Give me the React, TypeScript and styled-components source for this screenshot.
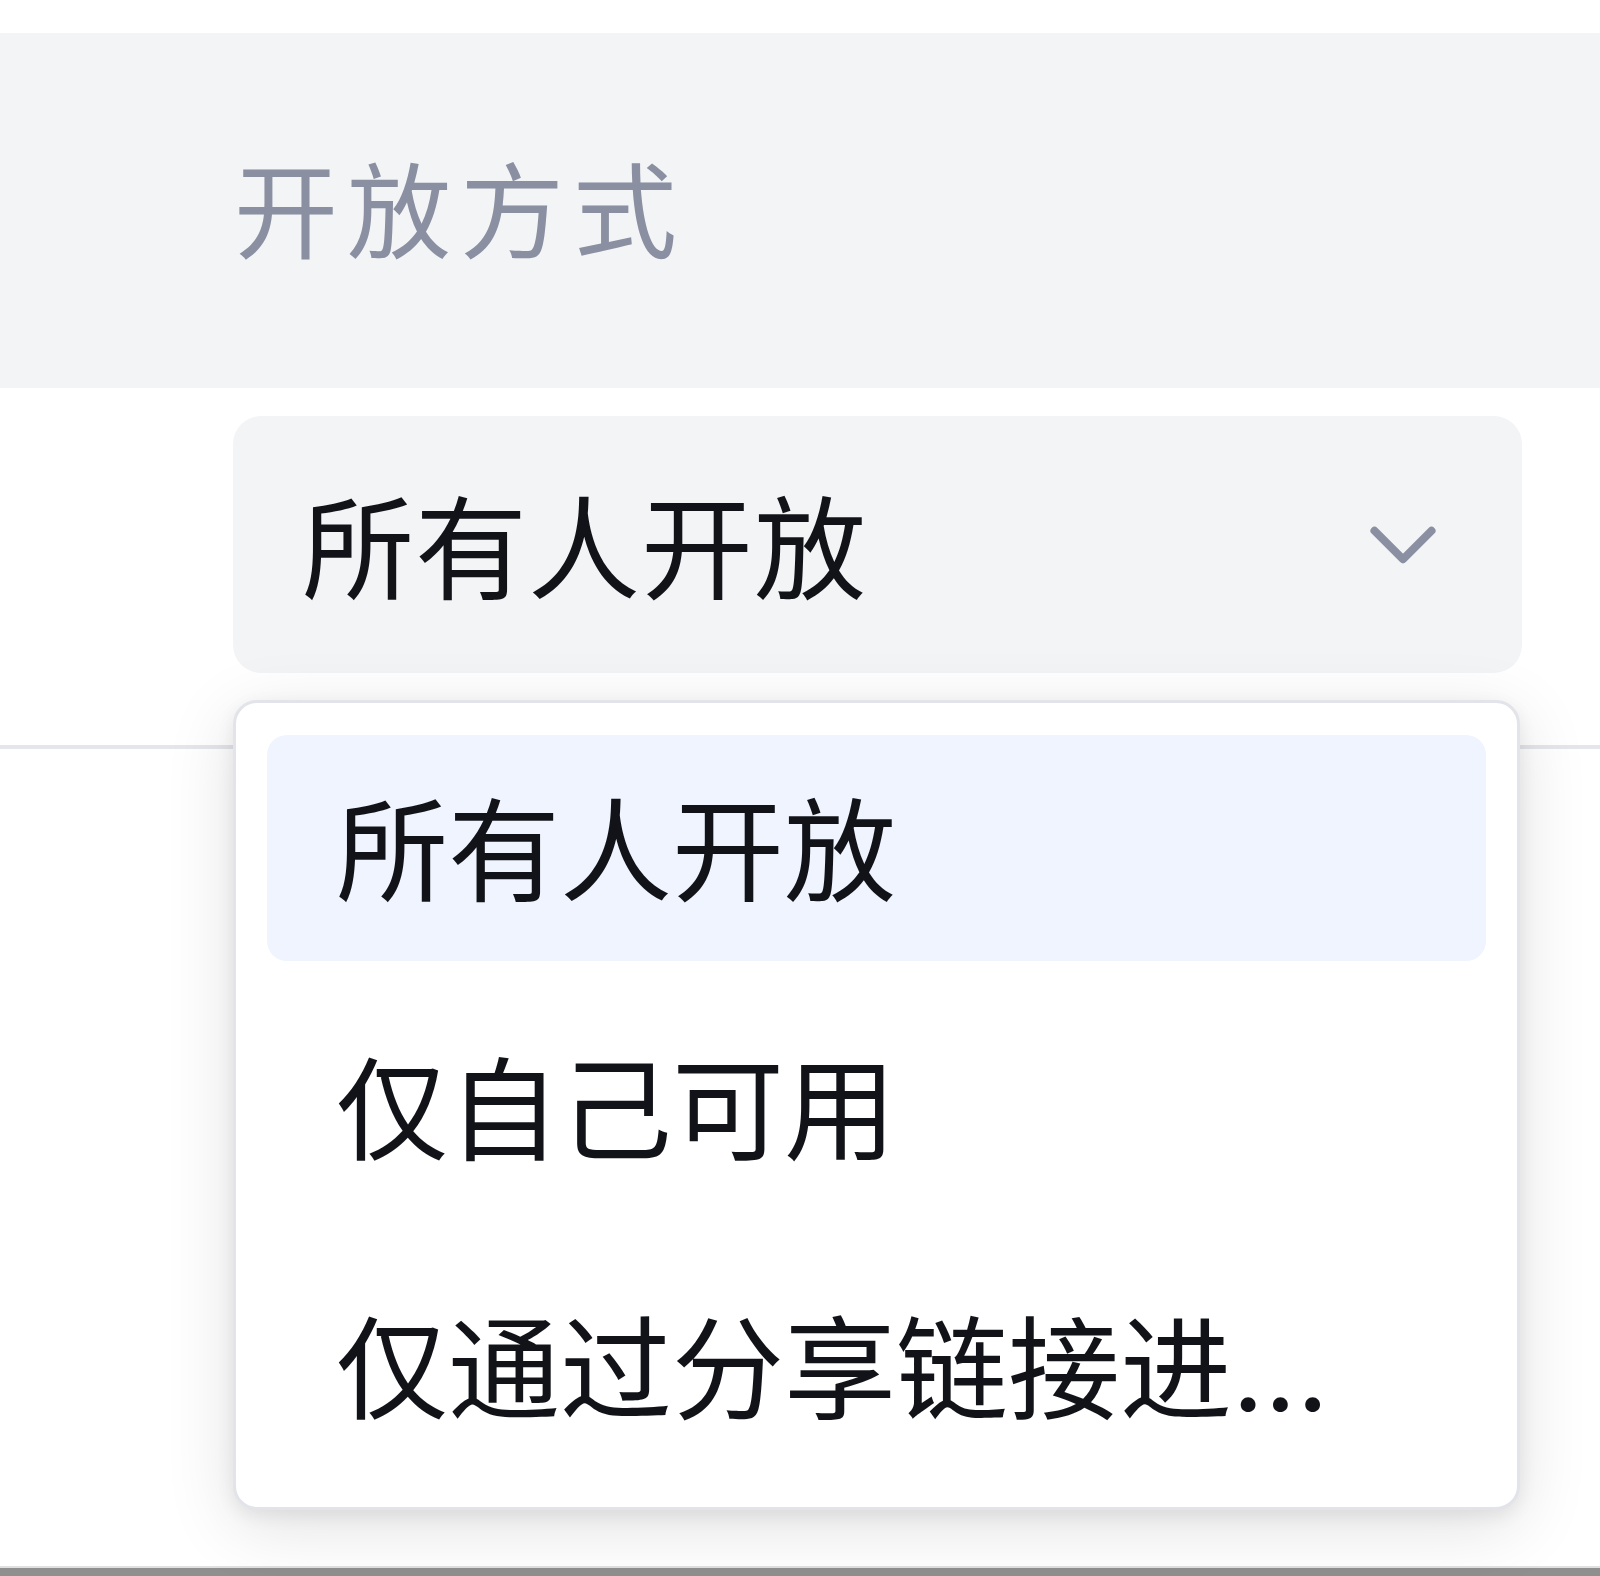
import React, { useState } from 'react';
import styled, { createGlobalStyle } from 'styled-components';
import { ChevronDown } from 'lucide-react';

const GlobalStyle = createGlobalStyle`
  html, body {
    margin: 0;
    padding: 0;
    background: #ffffff;
  }
  body {
    font-family: "Inter", "Noto Sans CJK SC", "Noto Sans", sans-serif;
    color: #111318;
  }
  * {
    box-sizing: border-box;
  }
`;

const Page = styled.div`
  min-height: 100vh;
  display: flex;
  flex-direction: column;
  padding-top: 33px;
  overflow: hidden;
`;

const Table = styled.div`
  display: flex;
  flex-direction: column;
`;

const HeaderRow = styled.div`
  height: 355px;
  background: #f3f4f6;
  display: flex;
  align-items: center;
  padding: 0 0 10px 234px;
`;

const HeaderLabel = styled.span`
  font-size: 104px;
  color: #8a8fa1;
  letter-spacing: 9px;
`;

const BodyRow = styled.div`
  padding: 28px 0 72px 233px;
  border-bottom: 4px solid #e4e6eb;
`;

const SelectWrap = styled.div`
  position: relative;
  width: 1289px;
`;

const SelectBox = styled.div`
  height: 257px;
  background: #f3f4f6;
  border-radius: 28px;
  display: flex;
  align-items: center;
  justify-content: space-between;
  padding: 0 62px 6px 69px;
  font-size: 112px;
  letter-spacing: 1px;
  cursor: pointer;

  .chevron {
    color: #8a8fa1;
    flex-shrink: 0;
    margin-top: 6px;
  }
`;

const Menu = styled.ul`
  position: absolute;
  top: calc(100% + 27px);
  left: 0;
  width: 1287px;
  margin: 0;
  list-style: none;
  background: #ffffff;
  border: 3px solid #e2e4ea;
  border-radius: 24px;
  padding: 32px 31px 28px;
  display: flex;
  flex-direction: column;
  gap: 33px;
  box-shadow: 0 16px 70px rgba(0, 0, 0, 0.12), 0 6px 18px rgba(0, 0, 0, 0.07);
  z-index: 10;
`;

const MenuItem = styled.li<{ $active: boolean }>`
  height: 226px;
  display: flex;
  align-items: center;
  padding: 0 64px 8px 69px;
  border-radius: 20px;
  font-size: 112px;
  white-space: nowrap;
  overflow: hidden;
  text-overflow: ellipsis;
  background: ${p => (p.$active ? '#eff4fe' : 'transparent')};
  cursor: pointer;
`;

const Spacer = styled.div`
  flex: 1;
`;

const BottomBar = styled.div`
  height: 10px;
  background: #8f8f8f;
  border-top: 2px solid #e0e0e0;
`;

const options = ['所有人开放', '仅自己可用', '仅通过分享链接进...'];

export default function App() {
  const [selected, setSelected] = useState(0);

  return (
    <>
      <GlobalStyle />
      <Page>
        <Table>
          <HeaderRow>
            <HeaderLabel>开放方式</HeaderLabel>
          </HeaderRow>
          <BodyRow>
            <SelectWrap>
              <SelectBox>
                <span>{options[selected]}</span>
                <ChevronDown className="chevron" size={114} strokeWidth={1.7} />
              </SelectBox>
              <Menu>
                {options.map((opt, i) => (
                  <MenuItem key={opt} $active={i === selected} onClick={() => setSelected(i)}>
                    {opt}
                  </MenuItem>
                ))}
              </Menu>
            </SelectWrap>
          </BodyRow>
        </Table>
        <Spacer />
        <BottomBar />
      </Page>
    </>
  );
}
